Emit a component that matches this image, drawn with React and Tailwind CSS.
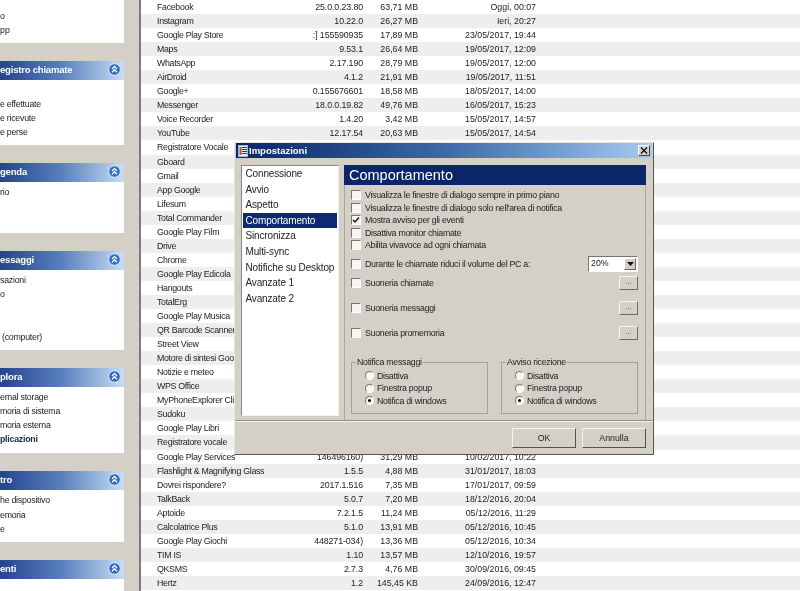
import React from "react";

const rows = [
  ["Facebook", "25.0.0.23.80", "63,71 MB", "Oggi, 00:07"],
  ["Instagram", "10.22.0", "26,27 MB", "Ieri, 20:27"],
  ["Google Play Store", ":] 155590935", "17,89 MB", "23/05/2017, 19:44"],
  ["Maps", "9.53.1", "26,64 MB", "19/05/2017, 12:09"],
  ["WhatsApp", "2.17.190", "28,79 MB", "19/05/2017, 12:00"],
  ["AirDroid", "4.1.2", "21,91 MB", "19/05/2017, 11:51"],
  ["Google+", "0.155676601", "18,58 MB", "18/05/2017, 14:00"],
  ["Messenger", "18.0.0.19.82", "49,76 MB", "16/05/2017, 15:23"],
  ["Voice Recorder", "1.4.20", "3,42 MB", "15/05/2017, 14:57"],
  ["YouTube", "12.17.54", "20,63 MB", "15/05/2017, 14:54"],
  ["Registratore Vocale"],
  ["Gboard"],
  ["Gmail"],
  ["App Google"],
  ["Lifesum"],
  ["Total Commander"],
  ["Google Play Film"],
  ["Drive"],
  ["Chrome"],
  ["Google Play Edicola"],
  ["Hangouts"],
  ["TotalErg"],
  ["Google Play Musica"],
  ["QR Barcode Scanner"],
  ["Street View"],
  ["Motore di sintesi Google"],
  ["Notizie e meteo"],
  ["WPS Office"],
  ["MyPhoneExplorer Client"],
  ["Sudoku"],
  ["Google Play Libri"],
  ["Registratore vocale"],
  ["Google Play Services", "146496160)", "31,29 MB", "10/02/2017, 10:22"],
  ["Flashlight & Magnifying Glass", "1.5.5", "4,88 MB", "31/01/2017, 18:03"],
  ["Dovrei rispondere?", "2017.1.516", "7,35 MB", "17/01/2017, 09:59"],
  ["TalkBack", "5.0.7", "7,20 MB", "18/12/2016, 20:04"],
  ["Aptoide", "7.2.1.5", "11,24 MB", "05/12/2016, 11:29"],
  ["Calcolatrice Plus", "5.1.0", "13,91 MB", "05/12/2016, 10:45"],
  ["Google Play Giochi", "448271-034)", "13,36 MB", "05/12/2016, 10:34"],
  ["TIM IS", "1.10", "13,57 MB", "12/10/2016, 19:57"],
  ["QKSMS", "2.7.3", "4,76 MB", "30/09/2016, 09:45"],
  ["Hertz", "1.2", "145,45 KB", "24/09/2016, 12:47"],
];

function Chevron() {
  return (
    <svg width="13" height="13" viewBox="0 0 13 13" className="shrink-0 -mt-[2px]">
      <circle cx="6.500" cy="6.500" r="5.800" fill="#2a6cc6" stroke="#e4eefb" strokeWidth="1" />
      <path d="M4 6 6.500 3.500 9 6M4 9.200 6.500 6.700 9 9.200" fill="none" stroke="#fff" strokeWidth="1.300" />
    </svg>
  );
}

function Section({ title, height, lines }) {
  return (
    <div className="flex flex-col">
      <div className="h-[19px] flex items-center justify-between pr-[3.500px] bg-gradient-to-r from-[#26438f] via-[#5a80bd] to-[#c9dcf4]">
        <span className="text-[9.500px] font-bold text-white tracking-[-0.2px] leading-none pb-[1px]">{title}</span>
        <Chevron />
      </div>
      <div className="bg-white relative" style={{ height }}>
        {lines.map(([text, top, bold, left = 0]) => (
          <div
            key={text}
            className={`absolute text-[8.800px] tracking-[-0.25px] leading-[14px] whitespace-nowrap ${bold ? "font-bold text-[#1a2a50]" : "text-[#222]"}`}
            style={{ top, left }}
          >
            {text}
          </div>
        ))}
      </div>
    </div>
  );
}

function Check({ checked }) {
  return (
    <span className="w-[10px] h-[10px] shrink-0 bg-[#f6f5f1] border border-t-[#77756f] border-l-[#77756f] border-b-white border-r-white flex items-center justify-center">
      {checked && (
        <svg width="8" height="8" viewBox="0 0 8 8">
          <path d="M1 4l2 2 4-4.500" fill="none" stroke="#111" strokeWidth="1.400" />
        </svg>
      )}
    </span>
  );
}

function CheckRow({ label, checked }) {
  return (
    <div className="flex items-center gap-[4px] h-[12.500px]">
      <Check checked={checked} />
      <span className="text-[8.800px] tracking-[-0.28px] text-[#222] leading-[12px] whitespace-nowrap">{label}</span>
    </div>
  );
}

function Dots() {
  return (
    <div className="w-[19px] h-[14px] bg-[#d4d0c8] border border-t-[#f4f3ef] border-l-[#f4f3ef] border-b-[#6f6d68] border-r-[#6f6d68] text-[8px] leading-[10px] text-center text-[#555] shrink-0">
      ...
    </div>
  );
}

function Radio({ checked, label }) {
  return (
    <div className="flex items-center gap-[3px] h-[12.500px]">
      <span className="w-[9px] h-[9px] rounded-full bg-[#f7f6f3] border border-t-[#77756f] border-l-[#77756f] border-b-white border-r-white flex items-center justify-center">
        {checked && <span className="w-[3px] h-[3px] rounded-full bg-black" />}
      </span>
      <span className="text-[8.800px] tracking-[-0.28px] text-[#222] leading-[12px] whitespace-nowrap">{label}</span>
    </div>
  );
}

function Group({ title }) {
  return (
    <div className="relative w-[137px] h-[52px] border border-[#a3a199] pl-[13px] pt-[7px]">
      <span className="absolute left-[4px] -top-[6px] bg-[#d4d0c8] px-[1px] text-[8.800px] tracking-[-0.28px] text-[#222] leading-[11px] whitespace-nowrap">{title}</span>
      <Radio label="Disattiva" />
      <Radio label="Finestra popup" />
      <Radio label="Notifica di windows" checked />
    </div>
  );
}

const nav = ["Connessione", "Avvio", "Aspetto", "Comportamento", "Sincronizza", "Multi-sync", "Notifiche su Desktop", "Avanzate 1", "Avanzate 2"];

function Dialog() {
  return (
    <div className="absolute left-[234px] top-[142px] w-[420px] h-[313px] bg-[#d4d0c8] border border-[#55534f] border-l-[#e8e6e1] border-t-[#e8e6e1] flex flex-col">
      <div className="h-[15px] mx-[1px] flex items-center justify-between pl-[2px] pr-[2px] bg-gradient-to-r from-[#0a246a] via-[#3f68a8] to-[#a6caf0] shrink-0">
        <div className="flex items-center gap-[1px]">
          <svg width="10" height="12" viewBox="0 0 10 12">
            <rect x="0.500" y="0.500" width="9" height="11" fill="#e8eefc" stroke="#9cb8e8" />
            <rect x="1.500" y="2" width="2" height="8" fill="#c04a30" />
            <path d="M4 2.500h5M4 4.500h5M4 6.500h5M4 8.500h5" stroke="#1c3a80" strokeWidth="1" />
          </svg>
          <span className="text-[9.500px] font-bold text-white leading-none">Impostazioni</span>
        </div>
        <div className="w-[12px] h-[11px] bg-[#d4d0c8] border border-t-white border-l-white border-b-[#404040] border-r-[#404040] flex items-center justify-center">
          <svg width="8" height="7" viewBox="0 0 8 7"><path d="M1 0.500l6 6M7 0.500l-6 6" stroke="#111" strokeWidth="1.300" /></svg>
        </div>
      </div>
      <div className="flex h-[262px] pl-[6px] pt-[7px] gap-[5px] shrink-0">
        <div className="w-[98px] h-[251px] bg-white border border-t-[#8a8881] border-l-[#8a8881] border-b-[#f2f1ed] border-r-[#f2f1ed] px-[1px] shrink-0">
          {nav.map((n, i) => (
            <div key={n} className={`h-[15.600px] leading-[15.600px] pl-[2.500px] text-[10px] tracking-[-0.15px] whitespace-nowrap ${i === 3 ? "bg-[#0f2a70] text-white" : "text-[#222]"}`}>{n}</div>
          ))}
        </div>
        <div className="w-[302px] h-[255px] border border-t-0 border-b-0 border-[#a9a79f] flex flex-col shrink-0">
          <div className="h-[20px] -mx-[1px] bg-[#0b2569] text-white text-[14.500px] leading-[20px] pl-[5px] shrink-0">Comportamento</div>
          <div className="pl-[6px] pt-[4px] pr-[7px] flex flex-col">
            <CheckRow label="Visualizza le finestre di dialogo sempre in primo piano" />
            <CheckRow label="Visualizza le finestre di dialogo solo nell'area di notifica" />
            <CheckRow label="Mostra avviso per gli eventi" checked />
            <CheckRow label="Disattiva monitor chiamate" />
            <CheckRow label="Abilita vivavoce ad ogni chiamata" />
            <div className="flex items-center justify-between mt-[4px] h-[16px]">
              <CheckRow label="Durante le chiamate riduci il volume del PC a:" />
              <div className="w-[50px] h-[16px] bg-white border border-t-[#77756f] border-l-[#77756f] border-b-white border-r-white flex items-center justify-between pl-[2px] pr-[1px]">
                <span className="text-[8.800px] text-[#222] leading-none">20%</span>
                <div className="w-[12px] h-[12px] bg-[#d4d0c8] border border-t-white border-l-white border-b-[#666] border-r-[#666] flex items-center justify-center">
                  <svg width="7" height="4" viewBox="0 0 7 4"><path d="M0 0h7L3.500 4z" fill="#111" /></svg>
                </div>
              </div>
            </div>
            <div className="flex items-center justify-between mt-[3px] h-[16px]"><CheckRow label="Suoneria chiamate" /><Dots /></div>
            <div className="flex items-center justify-between mt-[9px] h-[16px]"><CheckRow label="Suoneria messaggi" /><Dots /></div>
            <div className="flex items-center justify-between mt-[9px] h-[16px]"><CheckRow label="Suoneria promemoria" /><Dots /></div>
            <div className="flex justify-between mt-[21px]">
              <Group title="Notifica messaggi" />
              <Group title="Avviso ricezione" />
            </div>
          </div>
        </div>
      </div>
      <div className="h-[2px] mx-[1px] border-t border-b border-t-[#8f8d86] border-b-[#f2f1ed] shrink-0" />
      <div className="flex justify-end gap-[6px] pr-[7px] pt-[6px]">
        {["OK", "Annulla"].map((t) => (
          <div key={t} className="w-[64px] h-[20px] bg-[#d4d0c8] border border-t-[#f4f3ef] border-l-[#f4f3ef] border-b-[#55534f] border-r-[#55534f] text-[8.800px] text-[#222] leading-[18px] text-center">{t}</div>
        ))}
      </div>
    </div>
  );
}

export default function App() {
  return (
    <div className="relative w-[800px] h-[591px] overflow-hidden flex bg-white text-[#222] blur-[0.3px]" style={{ fontFamily: '"Liberation Sans", Arial, sans-serif' }}>
      <aside className="w-[139px] h-full bg-[#d4d0c8] shrink-0 overflow-hidden">
        <div className="w-[124px] flex flex-col gap-[18px]">
          <div className="h-[43px] bg-white relative">
            <div className="absolute left-0 top-[9px] text-[8.800px] leading-[14px]">o</div>
            <div className="absolute left-0 top-[23px] text-[8.800px] leading-[14px]">pp</div>
          </div>
          <Section title="egistro chiamate" height={65} lines={[["e effettuate", 17], ["e ricevute", 31], ["e perse", 45]]} />
          <Section title="genda" height={51} lines={[["rio", 3]]} />
          <Section title="essaggi" height={80} lines={[["sazioni", 3], ["o", 17], ["(computer)", 60, false, 2]]} />
          <Section title="plora" height={66} lines={[["ernal storage", 3], ["moria di sistema", 17], ["moria esterna", 31], ["plicazioni", 45, true]]} />
          <Section title="tro" height={52} lines={[["he dispositivo", 3], ["emoria", 18], ["e", 32]]} />
          <Section title="enti" height={20} lines={[]} />
        </div>
      </aside>
      <div className="w-[2px] bg-[#7d7b76] shrink-0" />
      <main className="flex-1 min-w-0">
        {rows.map(([name, ver = "", size = "", date = ""], i) => (
          <div key={i} className={`h-[14.050px] flex items-center text-[8.800px] leading-[14px] text-[#222] whitespace-nowrap ${i % 2 ? "bg-[#eeeeee]" : "bg-white"}`}>
            <div className="w-[171px] pl-[16px] shrink-0 tracking-[-0.3px]">{name}</div>
            <div className="w-[51px] shrink-0 flex justify-end tracking-[-0.1px]">{ver}</div>
            <div className="w-[55px] text-right shrink-0">{size}</div>
            <div className="w-[118px] text-right shrink-0">{date}</div>
          </div>
        ))}
      </main>
      <Dialog />
    </div>
  );
}
